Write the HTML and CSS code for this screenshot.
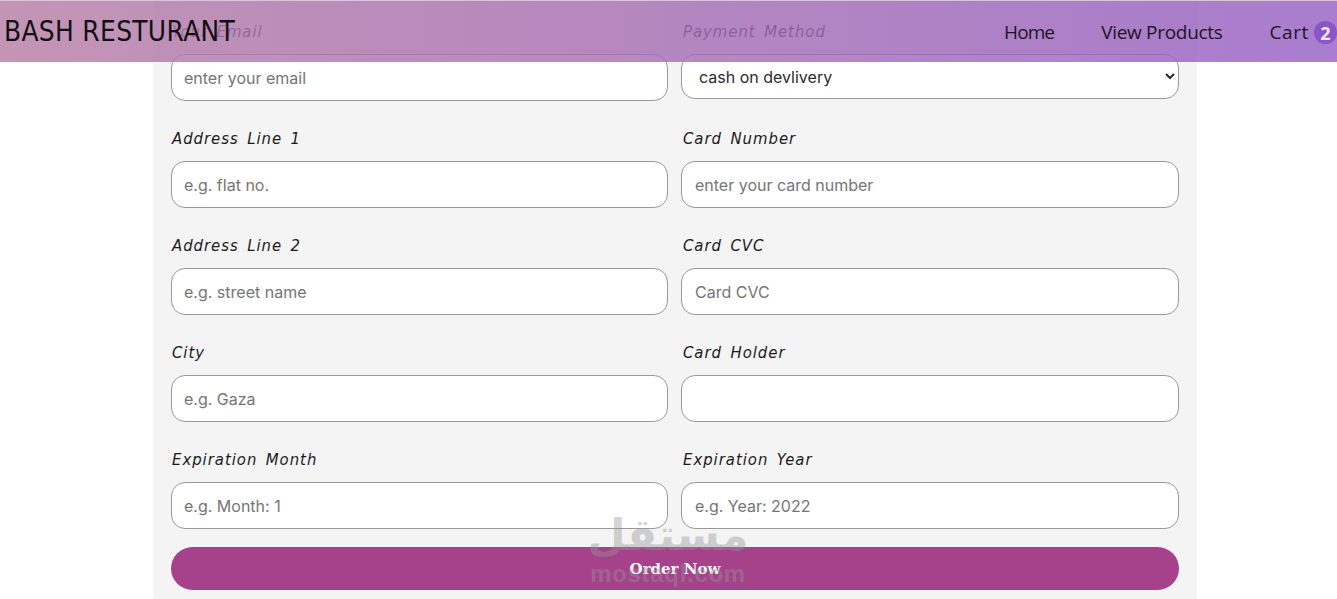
FILE: index.html
```html
<!DOCTYPE html>
<html lang="en">
<head>
<meta charset="utf-8">
<title>Bash Resturant</title>
<link rel="stylesheet" href="styles.css">
</head>
<body>
<header class="nav">
  <div class="brand">BASH RESTURANT</div>
  <nav class="links">
    <a class="link home">Home</a>
    <a class="link">View Products</a>
    <a class="link cart">Cart <span class="badge">2</span></a>
  </nav>
</header>
<main class="panel">
  <form class="grid">
    <div class="field"><label class="label">Your Email</label><input class="input" placeholder="enter your email"></div>
    <div class="field"><label class="label">Payment Method</label><select class="input select"><option>cash on devlivery</option></select></div>
    <div class="field"><label class="label">Address Line 1</label><input class="input" placeholder="e.g. flat no."></div>
    <div class="field"><label class="label">Card Number</label><input class="input" placeholder="enter your card number"></div>
    <div class="field"><label class="label">Address Line 2</label><input class="input" placeholder="e.g. street name"></div>
    <div class="field"><label class="label">Card CVC</label><input class="input" placeholder="Card CVC"></div>
    <div class="field"><label class="label">City</label><input class="input" placeholder="e.g. Gaza"></div>
    <div class="field"><label class="label">Card Holder</label><input class="input"></div>
    <div class="field"><label class="label">Expiration Month</label><input class="input" placeholder="e.g. Month: 1"></div>
    <div class="field"><label class="label">Expiration Year</label><input class="input" placeholder="e.g. Year: 2022"></div>
  </form>
  <button class="order" type="button">Order Now</button>
</main>
<div class="mark">
  <div class="mark-ar">مستقل</div>
  <div class="mark-en">mostaql.com</div>
</div>
</body>
</html>
```
FILE: styles.css
```css
* { box-sizing: border-box; }
html, body { margin: 0; height: 599px; overflow: hidden; background: #fff; }
body { font-family: "Inter", "Liberation Sans", sans-serif; position: relative; }

.nav {
  position: absolute; top: 0; left: 0; right: 0; height: 62px; z-index: 2;
  display: flex; align-items: center; justify-content: space-between;
  padding-left: 4px;
  border-top: 1px solid #d9c6d8;
  background: linear-gradient(90deg, rgba(183,125,165,.82), rgba(150,96,196,.82));
}
.brand {
  font-family: "DejaVu Sans", sans-serif; font-size: 25px; letter-spacing: .3px; font-weight: 400;
  color: #111; transform: scaleY(1.1);
}
.links { display: flex; align-items: center; gap: 47px; }
.link {
  font-family: "Open Sans", sans-serif; font-size: 19px; color: #1d1424;
  letter-spacing: -.3px;
}
.home { letter-spacing: -.9px; }
.cart { display: flex; align-items: center; gap: 5px; letter-spacing: .6px; }
.badge {
  width: 23px; height: 23px; border-radius: 50%; margin-top: 2px;
  display: flex; align-items: center; justify-content: center;
  background: #8a55c6; color: #f2e9f8; font-weight: 700; font-size: 18px; letter-spacing: 0;
}

.panel { width: 1044px; height: 599px; margin-left: 153px; padding: 20px 18px 0; background: #f4f4f4; }
.grid { display: grid; grid-template-columns: 497px 498px; column-gap: 13px; row-gap: 26px; align-items: start; }
.field { display: flex; flex-direction: column; gap: 10px; height: 81px; }
.label {
  display: block; height: 24px; line-height: 24px; margin-left: 1px;
  font-family: "DejaVu Sans", sans-serif; font-style: italic; font-size: 16px; color: #1b1b1b;
  letter-spacing: 1.05px; word-spacing: 3px; font-weight: 400; transform: scaleX(.93); transform-origin: left;
}
.field:nth-child(even) .label { margin-left: 2px; }
.input {
  width: 100%; height: 47px; padding: 0 12px; border: 1px solid #999; border-radius: 14px;
  background: #fff; font-family: "Inter", sans-serif; font-size: 16px; color: #333; outline: none;
}
.field:nth-child(even) .input { padding-left: 13px; }
.input::placeholder { color: #757575; opacity: 1; }
.field .select { height: 45px; padding: 0 12px; font-size: 16px; color: #2b2b2b; }
.order {
  display: block; width: 1008px; height: 43px; margin-top: 18px; border: 0; border-radius: 22px;
  background: #a5428b; color: #fff; font-family: "DejaVu Serif", "Liberation Serif", serif; font-weight: 700; font-size: 15px;
}

.mark {
  position: absolute; left: 589px; top: 509px; width: 158px; z-index: 3; pointer-events: none;
  display: flex; flex-direction: column; align-items: center; color: rgba(150,150,150,.42);
}
.mark-ar { font-family: "DejaVu Sans", sans-serif; font-weight: 700; font-size: 44px; line-height: 52px; }
.mark-en { font-family: "Liberation Sans", sans-serif; font-weight: 700; font-size: 24px; line-height: 26px; letter-spacing: .7px; white-space: nowrap; }
```
